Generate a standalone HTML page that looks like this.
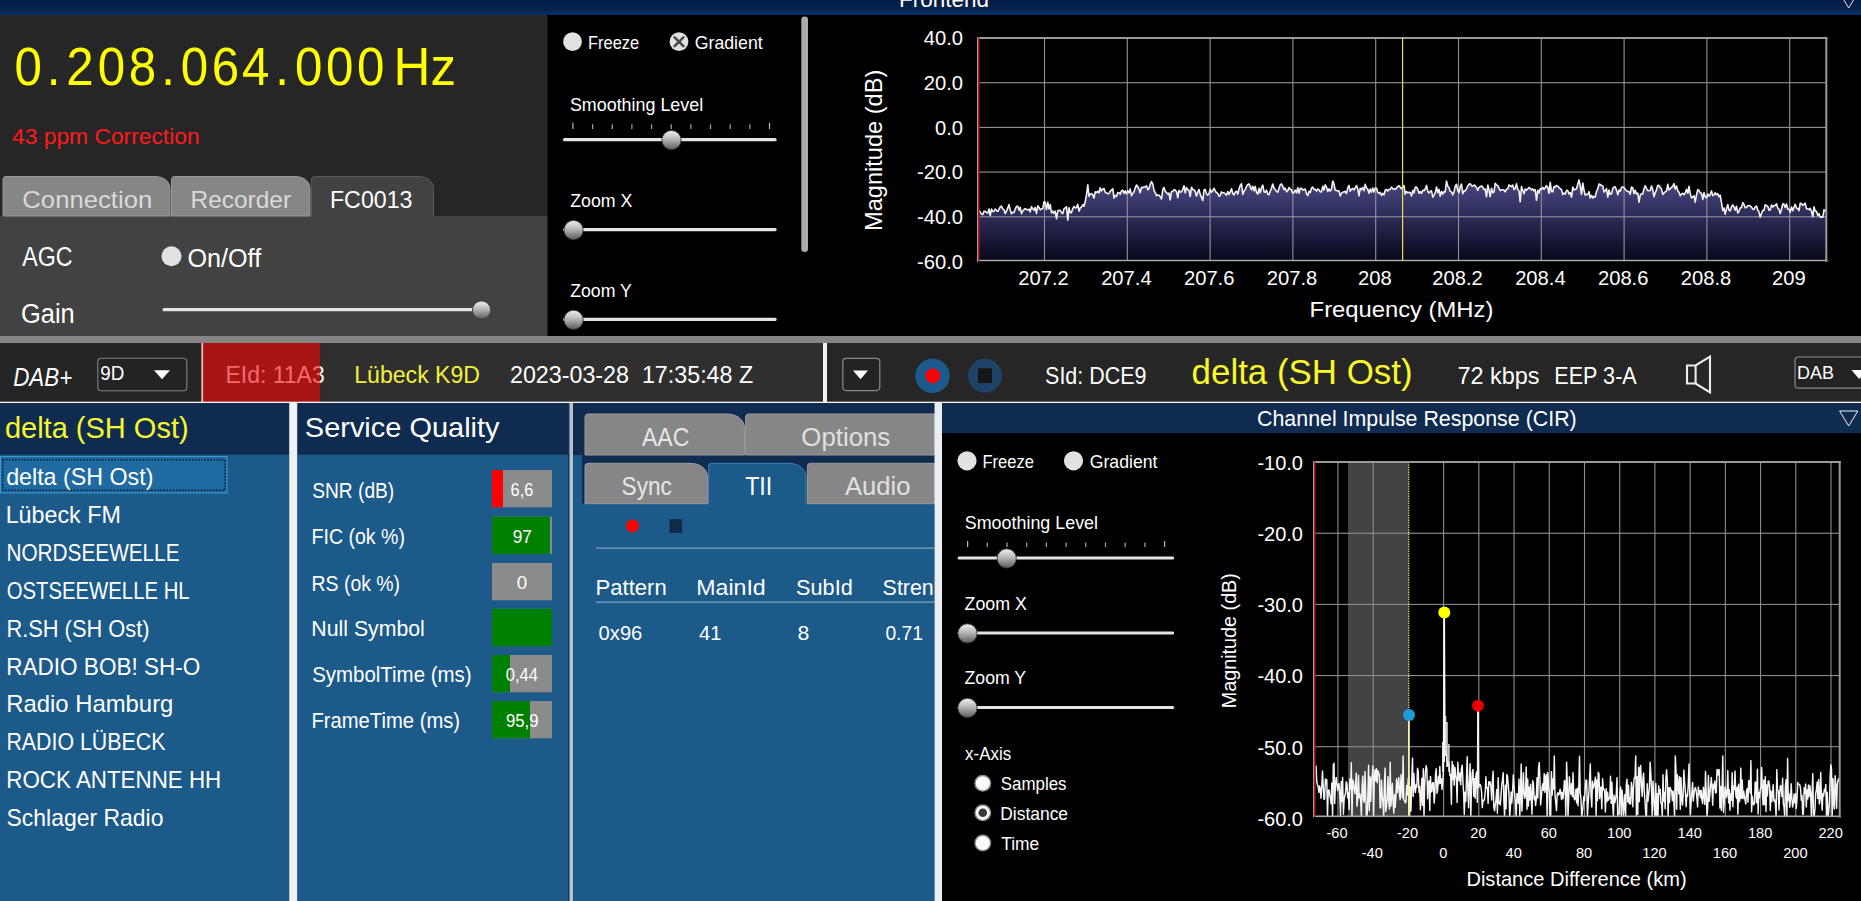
<!DOCTYPE html>
<html lang="en">
<head>
<meta charset="utf-8">
<title>DAB Receiver</title>
<style>
html,body{margin:0;padding:0;background:#000;overflow:hidden;}
body{width:1861px;height:901px;font-family:"Liberation Sans",sans-serif;}
svg{display:block;position:absolute;left:0;top:0;}
text{white-space:pre;}
</style>
</head>
<body>
<svg width="1861" height="901" viewBox="0 0 1861 901">
<defs>
<linearGradient id="thumb" x1="0" y1="0" x2="0" y2="1">
<stop offset="0" stop-color="#f0f0f0"/><stop offset="0.45" stop-color="#b8b8b8"/><stop offset="1" stop-color="#5a5a5a"/>
</linearGradient>
<linearGradient id="specfill" gradientUnits="userSpaceOnUse" x1="0" y1="184" x2="0" y2="261">
<stop offset="0" stop-color="#45457e"/><stop offset="0.45" stop-color="#2a2a55"/><stop offset="1" stop-color="#07071a"/>
</linearGradient>
<linearGradient id="tbar" x1="0" y1="0" x2="0" y2="1"><stop offset="0" stop-color="#041d45"/><stop offset="0.55" stop-color="#05224e"/><stop offset="1" stop-color="#082e64"/></linearGradient>
<clipPath id="clip1"><rect x="979" y="38" width="847.5" height="223"/></clipPath>
<clipPath id="clip2"><rect x="1315" y="462" width="824.5" height="354.5"/></clipPath>
</defs>
<rect x="0.00" y="0.00" width="1861.00" height="901.00" fill="#000" />
<rect x="0.00" y="0.00" width="1861.00" height="15.00" fill="url(#tbar)" />
<text x="899.07" y="7.00" font-family="Liberation Sans, sans-serif" font-size="21.50" fill="#fff" textLength="89.99" lengthAdjust="spacingAndGlyphs" >Frontend</text>
<path d="M1839.7,-7 L1857.7,-7 L1848.7,8 Z" fill="none" stroke="#e8e8e8" stroke-width="1"/>
<rect x="0.00" y="15.00" width="547.50" height="201.00" fill="#262626" />
<rect x="0.00" y="216.00" width="547.50" height="120.00" fill="#424242" />
<text transform="translate(28.10,85) scale(0.925,1)" text-anchor="middle" font-family="Liberation Sans, sans-serif" font-size="53.3" fill="#ffff00">0</text>
<text transform="translate(53.70,85) scale(0.925,1)" text-anchor="middle" font-family="Liberation Sans, sans-serif" font-size="53.3" fill="#ffff00">.</text>
<text transform="translate(79.90,85) scale(0.925,1)" text-anchor="middle" font-family="Liberation Sans, sans-serif" font-size="53.3" fill="#ffff00">2</text>
<text transform="translate(111.50,85) scale(0.925,1)" text-anchor="middle" font-family="Liberation Sans, sans-serif" font-size="53.3" fill="#ffff00">0</text>
<text transform="translate(142.40,85) scale(0.925,1)" text-anchor="middle" font-family="Liberation Sans, sans-serif" font-size="53.3" fill="#ffff00">8</text>
<text transform="translate(168.10,85) scale(0.925,1)" text-anchor="middle" font-family="Liberation Sans, sans-serif" font-size="53.3" fill="#ffff00">.</text>
<text transform="translate(194.40,85) scale(0.925,1)" text-anchor="middle" font-family="Liberation Sans, sans-serif" font-size="53.3" fill="#ffff00">0</text>
<text transform="translate(225.50,85) scale(0.925,1)" text-anchor="middle" font-family="Liberation Sans, sans-serif" font-size="53.3" fill="#ffff00">6</text>
<text transform="translate(255.80,85) scale(0.925,1)" text-anchor="middle" font-family="Liberation Sans, sans-serif" font-size="53.3" fill="#ffff00">4</text>
<text transform="translate(282.00,85) scale(0.925,1)" text-anchor="middle" font-family="Liberation Sans, sans-serif" font-size="53.3" fill="#ffff00">.</text>
<text transform="translate(308.60,85) scale(0.925,1)" text-anchor="middle" font-family="Liberation Sans, sans-serif" font-size="53.3" fill="#ffff00">0</text>
<text transform="translate(339.70,85) scale(0.925,1)" text-anchor="middle" font-family="Liberation Sans, sans-serif" font-size="53.3" fill="#ffff00">0</text>
<text transform="translate(370.70,85) scale(0.925,1)" text-anchor="middle" font-family="Liberation Sans, sans-serif" font-size="53.3" fill="#ffff00">0</text>
<text x="393.60" y="85.00" font-family="Liberation Sans, sans-serif" font-size="53.30" fill="#ffff00" textLength="62.48" lengthAdjust="spacingAndGlyphs" >Hz</text>
<text x="12.07" y="143.75" font-family="Liberation Sans, sans-serif" font-size="21.50" fill="#ff1a1a" textLength="187.52" lengthAdjust="spacingAndGlyphs" >43 ppm Correction</text>
<path d="M3.00,216.00 L3.00,179.50 Q3.00,176.50 6.00,176.50 L155.00,176.50 C163.70,176.50 170.00,181.54 170.00,188.50 L170.00,216.00 Z" fill="#868686" stroke="#9a9a9a" stroke-width="1"/>
<path d="M171.50,216.00 L171.50,179.50 Q171.50,176.50 174.50,176.50 L295.00,176.50 C303.70,176.50 310.00,181.54 310.00,188.50 L310.00,216.00 Z" fill="#868686" stroke="#9a9a9a" stroke-width="1"/>
<path d="M311.50,216.50 L311.50,179.50 Q311.50,176.50 314.50,176.50 L418.50,176.50 C427.20,176.50 433.50,181.54 433.50,188.50 L433.50,216.50 Z" fill="#424242" stroke="#5a5a5a" stroke-width="1"/>
<rect x="312.00" y="215.50" width="121.00" height="2.00" fill="#424242" />
<text x="22.29" y="207.50" font-family="Liberation Sans, sans-serif" font-size="24.50" fill="#dadada" textLength="130.01" lengthAdjust="spacingAndGlyphs" >Connection</text>
<text x="190.61" y="207.50" font-family="Liberation Sans, sans-serif" font-size="24.50" fill="#dadada" textLength="100.43" lengthAdjust="spacingAndGlyphs" >Recorder</text>
<text x="329.96" y="207.50" font-family="Liberation Sans, sans-serif" font-size="24.50" fill="#fff" textLength="82.54" lengthAdjust="spacingAndGlyphs" >FC0013</text>
<text x="22.19" y="266.00" font-family="Liberation Sans, sans-serif" font-size="27.00" fill="#fff" textLength="50.28" lengthAdjust="spacingAndGlyphs" >AGC</text>
<circle cx="171.5" cy="256.3" r="10" fill="#e2e2e2"/>
<text x="187.47" y="266.80" font-family="Liberation Sans, sans-serif" font-size="25.00" fill="#fff" textLength="73.66" lengthAdjust="spacingAndGlyphs" >On/Off</text>
<text x="21.00" y="323.00" font-family="Liberation Sans, sans-serif" font-size="27.00" fill="#fff" textLength="53.78" lengthAdjust="spacingAndGlyphs" >Gain</text>
<rect x="162.50" y="308.00" width="327.50" height="3.20" fill="#e4e4e4" rx="1.5"/>
<circle cx="481.50" cy="310.00" r="9.1" fill="url(#thumb)" stroke="#3c3c3c" stroke-width="0.9"/>
<circle cx="572.5" cy="41.7" r="9.4" fill="#e2e2e2"/>
<text x="587.97" y="48.70" font-family="Liberation Sans, sans-serif" font-size="18.50" fill="#fff" textLength="51.17" lengthAdjust="spacingAndGlyphs" >Freeze</text>
<circle cx="679" cy="41.7" r="9.4" fill="#e2e2e2"/>
<path d="M674.6,37.3 L683.4,46.1 M683.4,37.3 L674.6,46.1" stroke="#4a4a4a" stroke-width="2.6" stroke-linecap="round"/>
<text x="694.76" y="48.70" font-family="Liberation Sans, sans-serif" font-size="18.50" fill="#fff" textLength="67.92" lengthAdjust="spacingAndGlyphs" >Gradient</text>
<text x="569.95" y="111.00" font-family="Liberation Sans, sans-serif" font-size="18.50" fill="#fff" textLength="133.19" lengthAdjust="spacingAndGlyphs" >Smoothing Level</text>
<rect x="572.30" y="122.80" width="1.20" height="6.20" fill="#b8b8b8" />
<rect x="591.96" y="124.30" width="1.20" height="4.70" fill="#a8a8a8" />
<rect x="611.62" y="124.30" width="1.20" height="4.70" fill="#a8a8a8" />
<rect x="631.28" y="124.30" width="1.20" height="4.70" fill="#a8a8a8" />
<rect x="650.94" y="124.30" width="1.20" height="4.70" fill="#a8a8a8" />
<rect x="670.60" y="124.30" width="1.20" height="4.70" fill="#a8a8a8" />
<rect x="690.26" y="124.30" width="1.20" height="4.70" fill="#a8a8a8" />
<rect x="709.92" y="124.30" width="1.20" height="4.70" fill="#a8a8a8" />
<rect x="729.58" y="124.30" width="1.20" height="4.70" fill="#a8a8a8" />
<rect x="749.24" y="124.30" width="1.20" height="4.70" fill="#a8a8a8" />
<rect x="768.90" y="122.80" width="1.20" height="6.20" fill="#b8b8b8" />
<rect x="563.00" y="138.00" width="213.60" height="3.20" fill="#e4e4e4" rx="1.5"/>
<circle cx="671.50" cy="140.00" r="9.6" fill="url(#thumb)" stroke="#3c3c3c" stroke-width="0.9"/>
<text x="570.20" y="206.80" font-family="Liberation Sans, sans-serif" font-size="18.50" fill="#fff" textLength="62.20" lengthAdjust="spacingAndGlyphs" >Zoom X</text>
<rect x="563.00" y="228.00" width="213.60" height="3.20" fill="#e4e4e4" rx="1.5"/>
<circle cx="573.60" cy="230.00" r="9.6" fill="url(#thumb)" stroke="#3c3c3c" stroke-width="0.9"/>
<text x="570.20" y="296.80" font-family="Liberation Sans, sans-serif" font-size="18.50" fill="#fff" textLength="61.61" lengthAdjust="spacingAndGlyphs" >Zoom Y</text>
<rect x="563.00" y="317.80" width="213.60" height="3.20" fill="#e4e4e4" rx="1.5"/>
<circle cx="573.60" cy="319.80" r="9.6" fill="url(#thumb)" stroke="#3c3c3c" stroke-width="0.9"/>
<rect x="801.30" y="16.60" width="6.70" height="235.40" fill="#ababab" rx="3.3"/>
<polygon points="979,261 979.0,210.3 980.2,212.1 981.5,214.2 982.8,214.4 984.0,211.2 985.2,211.4 986.5,212.5 987.8,212.9 989.0,209.0 990.2,215.7 991.5,209.1 992.8,211.4 994.0,211.5 995.2,209.1 996.5,210.5 997.8,211.4 999.0,209.4 1000.2,206.9 1001.5,206.2 1002.8,209.0 1004.0,209.6 1005.2,213.5 1006.5,211.1 1007.8,207.9 1009.0,204.6 1010.2,209.7 1011.5,213.8 1012.8,212.4 1014.0,212.5 1015.2,209.0 1016.5,206.3 1017.8,206.4 1019.0,210.2 1020.2,207.4 1021.5,213.7 1022.8,210.9 1024.0,209.5 1025.2,208.6 1026.5,209.5 1027.8,209.8 1029.0,209.2 1030.2,211.8 1031.5,206.6 1032.8,208.8 1034.0,210.2 1035.2,207.4 1036.5,213.4 1037.8,205.7 1039.0,207.4 1040.2,209.9 1041.5,208.9 1042.8,208.7 1044.0,201.8 1045.2,202.3 1046.5,209.7 1047.8,202.4 1049.0,209.0 1050.2,204.6 1051.5,212.9 1052.8,211.0 1054.0,213.5 1055.2,211.1 1056.5,218.7 1057.8,210.8 1059.0,210.2 1060.2,210.4 1061.5,212.7 1062.8,213.6 1064.0,208.8 1065.2,208.0 1066.5,206.9 1067.8,220.1 1069.0,207.8 1070.2,212.6 1071.5,212.6 1072.8,208.6 1074.0,206.4 1075.2,207.8 1076.5,207.6 1077.8,204.4 1079.0,211.2 1080.2,208.0 1081.5,207.0 1082.8,204.5 1084.0,206.2 1085.2,201.8 1086.5,194.7 1087.8,184.8 1089.0,196.5 1090.2,193.9 1091.5,193.5 1092.8,194.9 1094.0,198.1 1095.2,191.8 1096.5,192.5 1097.8,191.3 1099.0,192.9 1100.2,187.8 1101.5,190.9 1102.8,189.1 1104.0,188.5 1105.2,192.3 1106.5,192.9 1107.8,193.8 1109.0,193.4 1110.2,191.1 1111.5,190.1 1112.8,188.9 1114.0,198.2 1115.2,195.4 1116.5,196.3 1117.8,192.6 1119.0,192.7 1120.2,194.3 1121.5,190.9 1122.8,190.2 1124.0,193.3 1125.2,190.9 1126.5,193.8 1127.8,190.8 1129.0,192.9 1130.2,189.1 1131.5,195.6 1132.8,193.4 1134.0,191.7 1135.2,187.9 1136.5,185.0 1137.8,186.7 1139.0,189.2 1140.2,192.7 1141.5,187.3 1142.8,187.6 1144.0,186.9 1145.2,187.0 1146.5,185.8 1147.8,189.8 1149.0,188.6 1150.2,184.3 1151.5,181.5 1152.8,184.2 1154.0,190.2 1155.2,192.7 1156.5,195.6 1157.8,194.9 1159.0,195.3 1160.2,196.6 1161.5,199.0 1162.8,189.4 1164.0,187.4 1165.2,191.2 1166.5,192.6 1167.8,194.1 1169.0,193.1 1170.2,199.9 1171.5,191.7 1172.8,191.3 1174.0,189.8 1175.2,190.1 1176.5,191.7 1177.8,197.7 1179.0,190.4 1180.2,191.9 1181.5,192.0 1182.8,189.1 1184.0,185.7 1185.2,192.8 1186.5,187.5 1187.8,189.6 1189.0,190.3 1190.2,196.5 1191.5,187.2 1192.8,189.6 1194.0,189.8 1195.2,191.5 1196.5,196.1 1197.8,192.1 1199.0,189.4 1200.2,194.4 1201.5,197.4 1202.8,200.5 1204.0,190.0 1205.2,189.4 1206.5,193.9 1207.8,195.1 1209.0,193.7 1210.2,189.2 1211.5,192.2 1212.8,190.7 1214.0,188.3 1215.2,190.6 1216.5,192.8 1217.8,193.2 1219.0,196.2 1220.2,195.5 1221.5,191.9 1222.8,192.8 1224.0,192.9 1225.2,193.8 1226.5,195.1 1227.8,191.5 1229.0,194.4 1230.2,192.1 1231.5,188.8 1232.8,193.5 1234.0,195.0 1235.2,192.2 1236.5,191.2 1237.8,194.1 1239.0,189.1 1240.2,185.5 1241.5,183.8 1242.8,194.4 1244.0,191.2 1245.2,189.5 1246.5,186.2 1247.8,184.6 1249.0,183.9 1250.2,186.4 1251.5,189.8 1252.8,186.2 1254.0,190.9 1255.2,186.4 1256.5,192.4 1257.8,194.1 1259.0,188.4 1260.2,192.7 1261.5,187.7 1262.8,185.1 1264.0,191.7 1265.2,192.3 1266.5,190.1 1267.8,194.3 1269.0,194.8 1270.2,191.2 1271.5,188.1 1272.8,184.1 1274.0,188.3 1275.2,189.5 1276.5,191.4 1277.8,192.2 1279.0,188.4 1280.2,184.8 1281.5,183.9 1282.8,186.4 1284.0,189.4 1285.2,188.0 1286.5,191.8 1287.8,190.6 1289.0,187.5 1290.2,189.1 1291.5,190.0 1292.8,193.1 1294.0,192.3 1295.2,190.0 1296.5,192.8 1297.8,187.7 1299.0,193.2 1300.2,188.4 1301.5,188.2 1302.8,190.1 1304.0,189.5 1305.2,189.0 1306.5,193.8 1307.8,195.6 1309.0,191.2 1310.2,192.6 1311.5,188.2 1312.8,187.1 1314.0,189.3 1315.2,189.4 1316.5,191.1 1317.8,189.0 1319.0,189.9 1320.2,191.9 1321.5,191.7 1322.8,186.3 1324.0,189.9 1325.2,184.9 1326.5,187.1 1327.8,191.4 1329.0,188.8 1330.2,191.1 1331.5,189.2 1332.8,181.0 1334.0,184.1 1335.2,190.1 1336.5,190.4 1337.8,191.1 1339.0,190.9 1340.2,195.9 1341.5,193.1 1342.8,192.1 1344.0,192.0 1345.2,191.3 1346.5,193.5 1347.8,187.7 1349.0,185.4 1350.2,191.1 1351.5,189.2 1352.8,188.6 1354.0,189.9 1355.2,187.6 1356.5,185.6 1357.8,189.1 1359.0,195.8 1360.2,188.4 1361.5,189.7 1362.8,187.5 1364.0,190.7 1365.2,184.4 1366.5,188.0 1367.8,189.4 1369.0,193.2 1370.2,189.0 1371.5,192.1 1372.8,188.0 1374.0,192.0 1375.2,188.1 1376.5,188.3 1377.8,192.5 1379.0,193.5 1380.2,192.3 1381.5,195.4 1382.8,193.4 1384.0,194.8 1385.2,190.3 1386.5,189.5 1387.8,191.1 1389.0,189.5 1390.2,189.5 1391.5,187.0 1392.8,188.9 1394.0,188.8 1395.2,189.4 1396.5,188.1 1397.8,186.6 1399.0,185.7 1400.2,187.2 1401.5,188.8 1402.8,186.7 1404.0,185.7 1405.2,194.1 1406.5,191.5 1407.8,192.8 1409.0,192.2 1410.2,192.5 1411.5,195.9 1412.8,190.3 1414.0,192.8 1415.2,187.3 1416.5,187.1 1417.8,189.5 1419.0,193.2 1420.2,191.5 1421.5,193.4 1422.8,190.3 1424.0,190.7 1425.2,189.1 1426.5,185.4 1427.8,191.4 1429.0,192.9 1430.2,191.5 1431.5,190.8 1432.8,197.2 1434.0,195.2 1435.2,193.1 1436.5,187.0 1437.8,192.6 1439.0,189.4 1440.2,196.1 1441.5,191.4 1442.8,194.2 1444.0,191.6 1445.2,192.0 1446.5,181.1 1447.8,186.3 1449.0,187.5 1450.2,191.2 1451.5,191.9 1452.8,194.8 1454.0,192.0 1455.2,186.2 1456.5,184.3 1457.8,190.5 1459.0,192.7 1460.2,186.8 1461.5,184.1 1462.8,193.8 1464.0,190.9 1465.2,190.9 1466.5,188.9 1467.8,185.7 1469.0,184.2 1470.2,183.7 1471.5,185.7 1472.8,186.1 1474.0,185.0 1475.2,185.9 1476.5,187.5 1477.8,190.3 1479.0,187.2 1480.2,186.8 1481.5,185.8 1482.8,187.3 1484.0,189.5 1485.2,189.0 1486.5,196.8 1487.8,185.0 1489.0,190.0 1490.2,196.6 1491.5,188.3 1492.8,192.7 1494.0,191.8 1495.2,183.3 1496.5,184.9 1497.8,185.7 1499.0,188.1 1500.2,190.6 1501.5,189.8 1502.8,189.7 1504.0,190.3 1505.2,191.8 1506.5,189.2 1507.8,188.7 1509.0,184.9 1510.2,185.8 1511.5,186.6 1512.8,185.1 1514.0,189.6 1515.2,188.5 1516.5,183.8 1517.8,189.6 1519.0,190.8 1520.2,201.8 1521.5,186.6 1522.8,190.4 1524.0,193.8 1525.2,189.0 1526.5,190.1 1527.8,188.9 1529.0,187.4 1530.2,188.3 1531.5,190.0 1532.8,188.9 1534.0,190.9 1535.2,189.6 1536.5,200.3 1537.8,190.2 1539.0,193.0 1540.2,188.6 1541.5,189.4 1542.8,187.3 1544.0,189.3 1545.2,187.7 1546.5,185.7 1547.8,187.4 1549.0,193.3 1550.2,182.4 1551.5,191.6 1552.8,191.7 1554.0,186.5 1555.2,186.9 1556.5,185.6 1557.8,186.2 1559.0,187.4 1560.2,188.8 1561.5,189.6 1562.8,194.5 1564.0,193.1 1565.2,194.1 1566.5,190.4 1567.8,190.5 1569.0,194.0 1570.2,192.6 1571.5,197.1 1572.8,187.1 1574.0,190.0 1575.2,189.3 1576.5,188.9 1577.8,184.0 1579.0,179.9 1580.2,185.7 1581.5,194.3 1582.8,183.1 1584.0,190.1 1585.2,195.1 1586.5,194.3 1587.8,194.5 1589.0,191.7 1590.2,198.0 1591.5,195.4 1592.8,198.1 1594.0,196.1 1595.2,197.1 1596.5,191.4 1597.8,188.5 1599.0,184.1 1600.2,184.5 1601.5,185.5 1602.8,185.9 1604.0,192.0 1605.2,190.7 1606.5,188.7 1607.8,197.2 1609.0,190.0 1610.2,194.3 1611.5,193.9 1612.8,188.3 1614.0,187.1 1615.2,186.8 1616.5,190.1 1617.8,194.8 1619.0,190.1 1620.2,191.3 1621.5,187.5 1622.8,187.1 1624.0,187.4 1625.2,189.3 1626.5,190.7 1627.8,191.6 1629.0,191.6 1630.2,194.3 1631.5,187.0 1632.8,187.9 1634.0,193.7 1635.2,190.2 1636.5,193.9 1637.8,193.1 1639.0,202.2 1640.2,195.1 1641.5,193.9 1642.8,193.7 1644.0,188.7 1645.2,185.7 1646.5,188.3 1647.8,190.6 1649.0,190.7 1650.2,190.5 1651.5,186.1 1652.8,189.8 1654.0,196.8 1655.2,192.8 1656.5,189.9 1657.8,185.3 1659.0,185.5 1660.2,187.6 1661.5,189.1 1662.8,194.4 1664.0,193.0 1665.2,191.7 1666.5,191.2 1667.8,184.3 1669.0,190.0 1670.2,189.0 1671.5,187.3 1672.8,186.3 1674.0,183.7 1675.2,189.0 1676.5,186.1 1677.8,190.9 1679.0,192.2 1680.2,195.8 1681.5,193.9 1682.8,193.2 1684.0,194.7 1685.2,192.9 1686.5,189.3 1687.8,193.3 1689.0,186.3 1690.2,193.4 1691.5,197.9 1692.8,197.0 1694.0,195.7 1695.2,202.1 1696.5,194.9 1697.8,189.5 1699.0,190.6 1700.2,192.8 1701.5,193.2 1702.8,199.4 1704.0,192.6 1705.2,196.9 1706.5,197.8 1707.8,194.0 1709.0,196.1 1710.2,194.7 1711.5,190.9 1712.8,195.6 1714.0,194.8 1715.2,192.7 1716.5,194.7 1717.8,193.7 1719.0,196.7 1720.2,195.2 1721.5,202.6 1722.8,210.6 1724.0,208.0 1725.2,214.2 1726.5,209.0 1727.8,204.5 1729.0,210.3 1730.2,210.9 1731.5,206.8 1732.8,204.9 1734.0,207.0 1735.2,210.3 1736.5,206.2 1737.8,213.0 1739.0,211.4 1740.2,207.7 1741.5,207.6 1742.8,202.6 1744.0,204.5 1745.2,207.6 1746.5,207.5 1747.8,205.8 1749.0,205.5 1750.2,206.0 1751.5,207.1 1752.8,209.3 1754.0,209.4 1755.2,207.2 1756.5,206.0 1757.8,210.2 1759.0,211.9 1760.2,217.1 1761.5,213.5 1762.8,210.2 1764.0,210.4 1765.2,204.7 1766.5,205.8 1767.8,206.2 1769.0,210.3 1770.2,209.9 1771.5,205.0 1772.8,207.0 1774.0,205.5 1775.2,205.5 1776.5,203.8 1777.8,208.2 1779.0,209.1 1780.2,213.6 1781.5,209.3 1782.8,203.7 1784.0,204.2 1785.2,207.6 1786.5,204.0 1787.8,209.3 1789.0,209.3 1790.2,212.3 1791.5,207.0 1792.8,210.7 1794.0,207.1 1795.2,204.3 1796.5,208.0 1797.8,208.7 1799.0,210.6 1800.2,203.3 1801.5,203.6 1802.8,205.4 1804.0,204.3 1805.2,203.2 1806.5,208.8 1807.8,208.8 1809.0,209.6 1810.2,208.4 1811.5,211.5 1812.8,216.7 1814.0,206.9 1815.2,210.9 1816.5,211.3 1817.8,215.5 1819.0,213.7 1820.2,217.1 1821.5,216.9 1822.8,217.1 1824.0,209.9 1825.2,211.0 1826.5,208.4 1826.3,261" fill="url(#specfill)" clip-path="url(#clip1)"/>
<rect x="1043.95" y="38.00" width="1.10" height="223.00" fill="#92929a" />
<rect x="1126.75" y="38.00" width="1.10" height="223.00" fill="#92929a" />
<rect x="1209.55" y="38.00" width="1.10" height="223.00" fill="#92929a" />
<rect x="1292.35" y="38.00" width="1.10" height="223.00" fill="#92929a" />
<rect x="1375.15" y="38.00" width="1.10" height="223.00" fill="#92929a" />
<rect x="1457.95" y="38.00" width="1.10" height="223.00" fill="#92929a" />
<rect x="1540.75" y="38.00" width="1.10" height="223.00" fill="#92929a" />
<rect x="1623.55" y="38.00" width="1.10" height="223.00" fill="#92929a" />
<rect x="1706.35" y="38.00" width="1.10" height="223.00" fill="#92929a" />
<rect x="1789.15" y="38.00" width="1.10" height="223.00" fill="#92929a" />
<rect x="978.50" y="82.15" width="847.80" height="1.10" fill="#92929a" />
<rect x="978.50" y="126.85" width="847.80" height="1.10" fill="#92929a" />
<rect x="978.50" y="171.55" width="847.80" height="1.10" fill="#92929a" />
<rect x="978.50" y="216.25" width="847.80" height="1.10" fill="#92929a" />
<polyline points="979.0,210.3 980.2,212.1 981.5,214.2 982.8,214.4 984.0,211.2 985.2,211.4 986.5,212.5 987.8,212.9 989.0,209.0 990.2,215.7 991.5,209.1 992.8,211.4 994.0,211.5 995.2,209.1 996.5,210.5 997.8,211.4 999.0,209.4 1000.2,206.9 1001.5,206.2 1002.8,209.0 1004.0,209.6 1005.2,213.5 1006.5,211.1 1007.8,207.9 1009.0,204.6 1010.2,209.7 1011.5,213.8 1012.8,212.4 1014.0,212.5 1015.2,209.0 1016.5,206.3 1017.8,206.4 1019.0,210.2 1020.2,207.4 1021.5,213.7 1022.8,210.9 1024.0,209.5 1025.2,208.6 1026.5,209.5 1027.8,209.8 1029.0,209.2 1030.2,211.8 1031.5,206.6 1032.8,208.8 1034.0,210.2 1035.2,207.4 1036.5,213.4 1037.8,205.7 1039.0,207.4 1040.2,209.9 1041.5,208.9 1042.8,208.7 1044.0,201.8 1045.2,202.3 1046.5,209.7 1047.8,202.4 1049.0,209.0 1050.2,204.6 1051.5,212.9 1052.8,211.0 1054.0,213.5 1055.2,211.1 1056.5,218.7 1057.8,210.8 1059.0,210.2 1060.2,210.4 1061.5,212.7 1062.8,213.6 1064.0,208.8 1065.2,208.0 1066.5,206.9 1067.8,220.1 1069.0,207.8 1070.2,212.6 1071.5,212.6 1072.8,208.6 1074.0,206.4 1075.2,207.8 1076.5,207.6 1077.8,204.4 1079.0,211.2 1080.2,208.0 1081.5,207.0 1082.8,204.5 1084.0,206.2 1085.2,201.8 1086.5,194.7 1087.8,184.8 1089.0,196.5 1090.2,193.9 1091.5,193.5 1092.8,194.9 1094.0,198.1 1095.2,191.8 1096.5,192.5 1097.8,191.3 1099.0,192.9 1100.2,187.8 1101.5,190.9 1102.8,189.1 1104.0,188.5 1105.2,192.3 1106.5,192.9 1107.8,193.8 1109.0,193.4 1110.2,191.1 1111.5,190.1 1112.8,188.9 1114.0,198.2 1115.2,195.4 1116.5,196.3 1117.8,192.6 1119.0,192.7 1120.2,194.3 1121.5,190.9 1122.8,190.2 1124.0,193.3 1125.2,190.9 1126.5,193.8 1127.8,190.8 1129.0,192.9 1130.2,189.1 1131.5,195.6 1132.8,193.4 1134.0,191.7 1135.2,187.9 1136.5,185.0 1137.8,186.7 1139.0,189.2 1140.2,192.7 1141.5,187.3 1142.8,187.6 1144.0,186.9 1145.2,187.0 1146.5,185.8 1147.8,189.8 1149.0,188.6 1150.2,184.3 1151.5,181.5 1152.8,184.2 1154.0,190.2 1155.2,192.7 1156.5,195.6 1157.8,194.9 1159.0,195.3 1160.2,196.6 1161.5,199.0 1162.8,189.4 1164.0,187.4 1165.2,191.2 1166.5,192.6 1167.8,194.1 1169.0,193.1 1170.2,199.9 1171.5,191.7 1172.8,191.3 1174.0,189.8 1175.2,190.1 1176.5,191.7 1177.8,197.7 1179.0,190.4 1180.2,191.9 1181.5,192.0 1182.8,189.1 1184.0,185.7 1185.2,192.8 1186.5,187.5 1187.8,189.6 1189.0,190.3 1190.2,196.5 1191.5,187.2 1192.8,189.6 1194.0,189.8 1195.2,191.5 1196.5,196.1 1197.8,192.1 1199.0,189.4 1200.2,194.4 1201.5,197.4 1202.8,200.5 1204.0,190.0 1205.2,189.4 1206.5,193.9 1207.8,195.1 1209.0,193.7 1210.2,189.2 1211.5,192.2 1212.8,190.7 1214.0,188.3 1215.2,190.6 1216.5,192.8 1217.8,193.2 1219.0,196.2 1220.2,195.5 1221.5,191.9 1222.8,192.8 1224.0,192.9 1225.2,193.8 1226.5,195.1 1227.8,191.5 1229.0,194.4 1230.2,192.1 1231.5,188.8 1232.8,193.5 1234.0,195.0 1235.2,192.2 1236.5,191.2 1237.8,194.1 1239.0,189.1 1240.2,185.5 1241.5,183.8 1242.8,194.4 1244.0,191.2 1245.2,189.5 1246.5,186.2 1247.8,184.6 1249.0,183.9 1250.2,186.4 1251.5,189.8 1252.8,186.2 1254.0,190.9 1255.2,186.4 1256.5,192.4 1257.8,194.1 1259.0,188.4 1260.2,192.7 1261.5,187.7 1262.8,185.1 1264.0,191.7 1265.2,192.3 1266.5,190.1 1267.8,194.3 1269.0,194.8 1270.2,191.2 1271.5,188.1 1272.8,184.1 1274.0,188.3 1275.2,189.5 1276.5,191.4 1277.8,192.2 1279.0,188.4 1280.2,184.8 1281.5,183.9 1282.8,186.4 1284.0,189.4 1285.2,188.0 1286.5,191.8 1287.8,190.6 1289.0,187.5 1290.2,189.1 1291.5,190.0 1292.8,193.1 1294.0,192.3 1295.2,190.0 1296.5,192.8 1297.8,187.7 1299.0,193.2 1300.2,188.4 1301.5,188.2 1302.8,190.1 1304.0,189.5 1305.2,189.0 1306.5,193.8 1307.8,195.6 1309.0,191.2 1310.2,192.6 1311.5,188.2 1312.8,187.1 1314.0,189.3 1315.2,189.4 1316.5,191.1 1317.8,189.0 1319.0,189.9 1320.2,191.9 1321.5,191.7 1322.8,186.3 1324.0,189.9 1325.2,184.9 1326.5,187.1 1327.8,191.4 1329.0,188.8 1330.2,191.1 1331.5,189.2 1332.8,181.0 1334.0,184.1 1335.2,190.1 1336.5,190.4 1337.8,191.1 1339.0,190.9 1340.2,195.9 1341.5,193.1 1342.8,192.1 1344.0,192.0 1345.2,191.3 1346.5,193.5 1347.8,187.7 1349.0,185.4 1350.2,191.1 1351.5,189.2 1352.8,188.6 1354.0,189.9 1355.2,187.6 1356.5,185.6 1357.8,189.1 1359.0,195.8 1360.2,188.4 1361.5,189.7 1362.8,187.5 1364.0,190.7 1365.2,184.4 1366.5,188.0 1367.8,189.4 1369.0,193.2 1370.2,189.0 1371.5,192.1 1372.8,188.0 1374.0,192.0 1375.2,188.1 1376.5,188.3 1377.8,192.5 1379.0,193.5 1380.2,192.3 1381.5,195.4 1382.8,193.4 1384.0,194.8 1385.2,190.3 1386.5,189.5 1387.8,191.1 1389.0,189.5 1390.2,189.5 1391.5,187.0 1392.8,188.9 1394.0,188.8 1395.2,189.4 1396.5,188.1 1397.8,186.6 1399.0,185.7 1400.2,187.2 1401.5,188.8 1402.8,186.7 1404.0,185.7 1405.2,194.1 1406.5,191.5 1407.8,192.8 1409.0,192.2 1410.2,192.5 1411.5,195.9 1412.8,190.3 1414.0,192.8 1415.2,187.3 1416.5,187.1 1417.8,189.5 1419.0,193.2 1420.2,191.5 1421.5,193.4 1422.8,190.3 1424.0,190.7 1425.2,189.1 1426.5,185.4 1427.8,191.4 1429.0,192.9 1430.2,191.5 1431.5,190.8 1432.8,197.2 1434.0,195.2 1435.2,193.1 1436.5,187.0 1437.8,192.6 1439.0,189.4 1440.2,196.1 1441.5,191.4 1442.8,194.2 1444.0,191.6 1445.2,192.0 1446.5,181.1 1447.8,186.3 1449.0,187.5 1450.2,191.2 1451.5,191.9 1452.8,194.8 1454.0,192.0 1455.2,186.2 1456.5,184.3 1457.8,190.5 1459.0,192.7 1460.2,186.8 1461.5,184.1 1462.8,193.8 1464.0,190.9 1465.2,190.9 1466.5,188.9 1467.8,185.7 1469.0,184.2 1470.2,183.7 1471.5,185.7 1472.8,186.1 1474.0,185.0 1475.2,185.9 1476.5,187.5 1477.8,190.3 1479.0,187.2 1480.2,186.8 1481.5,185.8 1482.8,187.3 1484.0,189.5 1485.2,189.0 1486.5,196.8 1487.8,185.0 1489.0,190.0 1490.2,196.6 1491.5,188.3 1492.8,192.7 1494.0,191.8 1495.2,183.3 1496.5,184.9 1497.8,185.7 1499.0,188.1 1500.2,190.6 1501.5,189.8 1502.8,189.7 1504.0,190.3 1505.2,191.8 1506.5,189.2 1507.8,188.7 1509.0,184.9 1510.2,185.8 1511.5,186.6 1512.8,185.1 1514.0,189.6 1515.2,188.5 1516.5,183.8 1517.8,189.6 1519.0,190.8 1520.2,201.8 1521.5,186.6 1522.8,190.4 1524.0,193.8 1525.2,189.0 1526.5,190.1 1527.8,188.9 1529.0,187.4 1530.2,188.3 1531.5,190.0 1532.8,188.9 1534.0,190.9 1535.2,189.6 1536.5,200.3 1537.8,190.2 1539.0,193.0 1540.2,188.6 1541.5,189.4 1542.8,187.3 1544.0,189.3 1545.2,187.7 1546.5,185.7 1547.8,187.4 1549.0,193.3 1550.2,182.4 1551.5,191.6 1552.8,191.7 1554.0,186.5 1555.2,186.9 1556.5,185.6 1557.8,186.2 1559.0,187.4 1560.2,188.8 1561.5,189.6 1562.8,194.5 1564.0,193.1 1565.2,194.1 1566.5,190.4 1567.8,190.5 1569.0,194.0 1570.2,192.6 1571.5,197.1 1572.8,187.1 1574.0,190.0 1575.2,189.3 1576.5,188.9 1577.8,184.0 1579.0,179.9 1580.2,185.7 1581.5,194.3 1582.8,183.1 1584.0,190.1 1585.2,195.1 1586.5,194.3 1587.8,194.5 1589.0,191.7 1590.2,198.0 1591.5,195.4 1592.8,198.1 1594.0,196.1 1595.2,197.1 1596.5,191.4 1597.8,188.5 1599.0,184.1 1600.2,184.5 1601.5,185.5 1602.8,185.9 1604.0,192.0 1605.2,190.7 1606.5,188.7 1607.8,197.2 1609.0,190.0 1610.2,194.3 1611.5,193.9 1612.8,188.3 1614.0,187.1 1615.2,186.8 1616.5,190.1 1617.8,194.8 1619.0,190.1 1620.2,191.3 1621.5,187.5 1622.8,187.1 1624.0,187.4 1625.2,189.3 1626.5,190.7 1627.8,191.6 1629.0,191.6 1630.2,194.3 1631.5,187.0 1632.8,187.9 1634.0,193.7 1635.2,190.2 1636.5,193.9 1637.8,193.1 1639.0,202.2 1640.2,195.1 1641.5,193.9 1642.8,193.7 1644.0,188.7 1645.2,185.7 1646.5,188.3 1647.8,190.6 1649.0,190.7 1650.2,190.5 1651.5,186.1 1652.8,189.8 1654.0,196.8 1655.2,192.8 1656.5,189.9 1657.8,185.3 1659.0,185.5 1660.2,187.6 1661.5,189.1 1662.8,194.4 1664.0,193.0 1665.2,191.7 1666.5,191.2 1667.8,184.3 1669.0,190.0 1670.2,189.0 1671.5,187.3 1672.8,186.3 1674.0,183.7 1675.2,189.0 1676.5,186.1 1677.8,190.9 1679.0,192.2 1680.2,195.8 1681.5,193.9 1682.8,193.2 1684.0,194.7 1685.2,192.9 1686.5,189.3 1687.8,193.3 1689.0,186.3 1690.2,193.4 1691.5,197.9 1692.8,197.0 1694.0,195.7 1695.2,202.1 1696.5,194.9 1697.8,189.5 1699.0,190.6 1700.2,192.8 1701.5,193.2 1702.8,199.4 1704.0,192.6 1705.2,196.9 1706.5,197.8 1707.8,194.0 1709.0,196.1 1710.2,194.7 1711.5,190.9 1712.8,195.6 1714.0,194.8 1715.2,192.7 1716.5,194.7 1717.8,193.7 1719.0,196.7 1720.2,195.2 1721.5,202.6 1722.8,210.6 1724.0,208.0 1725.2,214.2 1726.5,209.0 1727.8,204.5 1729.0,210.3 1730.2,210.9 1731.5,206.8 1732.8,204.9 1734.0,207.0 1735.2,210.3 1736.5,206.2 1737.8,213.0 1739.0,211.4 1740.2,207.7 1741.5,207.6 1742.8,202.6 1744.0,204.5 1745.2,207.6 1746.5,207.5 1747.8,205.8 1749.0,205.5 1750.2,206.0 1751.5,207.1 1752.8,209.3 1754.0,209.4 1755.2,207.2 1756.5,206.0 1757.8,210.2 1759.0,211.9 1760.2,217.1 1761.5,213.5 1762.8,210.2 1764.0,210.4 1765.2,204.7 1766.5,205.8 1767.8,206.2 1769.0,210.3 1770.2,209.9 1771.5,205.0 1772.8,207.0 1774.0,205.5 1775.2,205.5 1776.5,203.8 1777.8,208.2 1779.0,209.1 1780.2,213.6 1781.5,209.3 1782.8,203.7 1784.0,204.2 1785.2,207.6 1786.5,204.0 1787.8,209.3 1789.0,209.3 1790.2,212.3 1791.5,207.0 1792.8,210.7 1794.0,207.1 1795.2,204.3 1796.5,208.0 1797.8,208.7 1799.0,210.6 1800.2,203.3 1801.5,203.6 1802.8,205.4 1804.0,204.3 1805.2,203.2 1806.5,208.8 1807.8,208.8 1809.0,209.6 1810.2,208.4 1811.5,211.5 1812.8,216.7 1814.0,206.9 1815.2,210.9 1816.5,211.3 1817.8,215.5 1819.0,213.7 1820.2,217.1 1821.5,216.9 1822.8,217.1 1824.0,209.9 1825.2,211.0 1826.5,208.4" fill="none" stroke="#f2f2f2" stroke-width="1.6" stroke-linejoin="round" clip-path="url(#clip1)"/>
<rect x="978.50" y="37.00" width="848.80" height="2.00" fill="#9a9a9a" />
<rect x="978.50" y="259.80" width="848.80" height="1.40" fill="#b0b0b0" />
<rect x="1825.30" y="37.00" width="2.00" height="225.00" fill="#9a9a9a" />
<rect x="977.00" y="37.00" width="1.10" height="225.00" fill="#a0a0a0" />
<rect x="978.00" y="38.00" width="1.60" height="223.00" fill="#b01a1a" />
<rect x="1402.00" y="38.00" width="1.20" height="223.00" fill="#e8e040" />
<text x="963.00" y="45.20" text-anchor="end" font-family="Liberation Sans, sans-serif" font-size="20.20" fill="#fff">40.0</text>
<text x="963.00" y="89.90" text-anchor="end" font-family="Liberation Sans, sans-serif" font-size="20.20" fill="#fff">20.0</text>
<text x="963.00" y="134.60" text-anchor="end" font-family="Liberation Sans, sans-serif" font-size="20.20" fill="#fff">0.0</text>
<text x="963.00" y="179.30" text-anchor="end" font-family="Liberation Sans, sans-serif" font-size="20.20" fill="#fff">-20.0</text>
<text x="963.00" y="224.00" text-anchor="end" font-family="Liberation Sans, sans-serif" font-size="20.20" fill="#fff">-40.0</text>
<text x="963.00" y="268.70" text-anchor="end" font-family="Liberation Sans, sans-serif" font-size="20.20" fill="#fff">-60.0</text>
<text x="1043.60" y="285.00" text-anchor="middle" font-family="Liberation Sans, sans-serif" font-size="20.20" fill="#fff" >207.2</text>
<text x="1126.40" y="285.00" text-anchor="middle" font-family="Liberation Sans, sans-serif" font-size="20.20" fill="#fff" >207.4</text>
<text x="1209.20" y="285.00" text-anchor="middle" font-family="Liberation Sans, sans-serif" font-size="20.20" fill="#fff" >207.6</text>
<text x="1292.00" y="285.00" text-anchor="middle" font-family="Liberation Sans, sans-serif" font-size="20.20" fill="#fff" >207.8</text>
<text x="1374.80" y="285.00" text-anchor="middle" font-family="Liberation Sans, sans-serif" font-size="20.20" fill="#fff" >208</text>
<text x="1457.60" y="285.00" text-anchor="middle" font-family="Liberation Sans, sans-serif" font-size="20.20" fill="#fff" >208.2</text>
<text x="1540.40" y="285.00" text-anchor="middle" font-family="Liberation Sans, sans-serif" font-size="20.20" fill="#fff" >208.4</text>
<text x="1623.20" y="285.00" text-anchor="middle" font-family="Liberation Sans, sans-serif" font-size="20.20" fill="#fff" >208.6</text>
<text x="1706.00" y="285.00" text-anchor="middle" font-family="Liberation Sans, sans-serif" font-size="20.20" fill="#fff" >208.8</text>
<text x="1788.80" y="285.00" text-anchor="middle" font-family="Liberation Sans, sans-serif" font-size="20.20" fill="#fff" >209</text>
<text x="1309.62" y="316.50" font-family="Liberation Sans, sans-serif" font-size="22.50" fill="#fff" textLength="183.77" lengthAdjust="spacingAndGlyphs" >Frequency (MHz)</text>
<text transform="translate(881.5,150.3) rotate(-90)" text-anchor="middle" font-family="Liberation Sans, sans-serif" font-size="23.6" fill="#fff" textLength="161.2" lengthAdjust="spacingAndGlyphs">Magnitude (dB)</text>
<rect x="0.00" y="336.00" width="1861.00" height="7.50" fill="#858585" />
<rect x="0.00" y="343.00" width="202.00" height="59.00" fill="#252525" />
<rect x="202.00" y="343.00" width="118.10" height="59.00" fill="#a81515" />
<rect x="201.40" y="343.00" width="1.70" height="59.00" fill="#f6c4c4" />
<rect x="320.10" y="343.00" width="503.40" height="59.00" fill="#2f2f2f" />
<rect x="823.00" y="343.00" width="4.00" height="59.00" fill="#f2f2f2" />
<rect x="827.00" y="343.00" width="1034.00" height="59.00" fill="#262626" />
<rect x="0.00" y="401.70" width="1861.00" height="1.40" fill="#f4f4f4" />
<text x="13.23" y="386.00" font-family="Liberation Sans, sans-serif" font-size="25.00" font-style="italic" fill="#fff" textLength="58.96" lengthAdjust="spacingAndGlyphs" >DAB+</text>
<rect x="97.8" y="358.3" width="89" height="32.5" rx="3.5" fill="#232323" stroke="#828282" stroke-width="1.1"/>
<text x="100.26" y="380.40" font-family="Liberation Sans, sans-serif" font-size="19.50" fill="#fff" textLength="24.04" lengthAdjust="spacingAndGlyphs" >9D</text>
<path d="M154,370.2 L170,370.2 L162,379.3 Z" fill="#fff"/>
<clipPath id="clipE1"><rect x="200" y="343" width="120.1" height="59"/></clipPath><clipPath id="clipE2"><rect x="320.1" y="343" width="30" height="59"/></clipPath>
<text x="225.43" y="382.60" font-family="Liberation Sans, sans-serif" font-size="23.00" fill="#f56a6a" textLength="99.24" lengthAdjust="spacingAndGlyphs" clip-path="url(#clipE1)">EId: 11A3</text>
<text x="225.43" y="382.60" font-family="Liberation Sans, sans-serif" font-size="23.00" fill="#f4f4f4" textLength="99.24" lengthAdjust="spacingAndGlyphs" clip-path="url(#clipE2)">EId: 11A3</text>
<text x="354.26" y="382.50" font-family="Liberation Sans, sans-serif" font-size="23.50" fill="#f2f23a" textLength="125.77" lengthAdjust="spacingAndGlyphs" >Lübeck K9D</text>
<text x="509.99" y="382.50" font-family="Liberation Sans, sans-serif" font-size="23.50" fill="#fff" textLength="243.17" lengthAdjust="spacingAndGlyphs" >2023-03-28  17:35:48 Z</text>
<rect x="842.8" y="358.3" width="37" height="32.3" rx="3.5" fill="#232323" stroke="#8a8a8a" stroke-width="1.2"/>
<path d="M853,370.6 L868,370.6 L860.5,379.2 Z" fill="#fff"/>
<circle cx="932.5" cy="375.8" r="17.2" fill="#1c5a8c"/>
<circle cx="932.7" cy="375.8" r="7.4" fill="#ff0000"/>
<circle cx="985" cy="375.8" r="17" fill="#1e4366"/>
<rect x="978.00" y="368.30" width="14.00" height="14.80" fill="#161616" />
<text x="1045.09" y="383.75" font-family="Liberation Sans, sans-serif" font-size="24.00" fill="#fff" textLength="101.31" lengthAdjust="spacingAndGlyphs" >SId: DCE9</text>
<text x="1191.61" y="383.75" font-family="Liberation Sans, sans-serif" font-size="35.00" fill="#f8f82c" textLength="220.89" lengthAdjust="spacingAndGlyphs" >delta (SH Ost)</text>
<text x="1457.40" y="384.20" font-family="Liberation Sans, sans-serif" font-size="24.50" fill="#fff" textLength="82.09" lengthAdjust="spacingAndGlyphs" >72 kbps</text>
<text x="1554.34" y="384.20" font-family="Liberation Sans, sans-serif" font-size="24.50" fill="#fff" textLength="82.38" lengthAdjust="spacingAndGlyphs" >EEP 3-A</text>
<path d="M1687,365.5 L1695.6,365.5 L1710,356.6 L1710,392.4 L1695.6,383.5 L1687,383.5 Z M1695.6,365.5 L1695.6,383.5" fill="none" stroke="#ececec" stroke-width="2.1" stroke-linejoin="miter"/>
<rect x="1795" y="357" width="80" height="31.2" rx="3.5" fill="#232323" stroke="#8a8a8a" stroke-width="1.2"/>
<text x="1796.98" y="378.80" font-family="Liberation Sans, sans-serif" font-size="19.00" fill="#fff" textLength="36.93" lengthAdjust="spacingAndGlyphs" >DAB</text>
<path d="M1851.5,370 L1867,370 L1859.2,379 Z" fill="#fff"/>
<rect x="0.00" y="403.00" width="289.20" height="51.40" fill="#0f2c50" />
<rect x="0.00" y="454.40" width="289.20" height="446.60" fill="#1c5a8a" />
<text x="4.89" y="437.60" font-family="Liberation Sans, sans-serif" font-size="30.00" fill="#f8f82c" textLength="183.76" lengthAdjust="spacingAndGlyphs" >delta (SH Ost)</text>
<rect x="0.5" y="456.5" width="226.5" height="36.5" fill="#1f6ba1" stroke="#3a96d4" stroke-width="1"/>
<rect x="2.7" y="459.7" width="222.4" height="30.6" fill="none" stroke="#0a1c30" stroke-width="1.6" stroke-dasharray="1.55,1.55"/>
<text x="6.13" y="485.00" font-family="Liberation Sans, sans-serif" font-size="24.00" fill="#fff" textLength="147.26" lengthAdjust="spacingAndGlyphs" >delta (SH Ost)</text>
<text x="5.66" y="522.70" font-family="Liberation Sans, sans-serif" font-size="24.00" fill="#fff" textLength="115.14" lengthAdjust="spacingAndGlyphs" >Lübeck FM</text>
<text x="6.47" y="560.80" font-family="Liberation Sans, sans-serif" font-size="24.00" fill="#fff" textLength="173.04" lengthAdjust="spacingAndGlyphs" >NORDSEEWELLE</text>
<text x="6.65" y="599.00" font-family="Liberation Sans, sans-serif" font-size="24.00" fill="#fff" textLength="183.04" lengthAdjust="spacingAndGlyphs" >OSTSEEWELLE HL</text>
<text x="6.38" y="636.90" font-family="Liberation Sans, sans-serif" font-size="24.00" fill="#fff" textLength="143.15" lengthAdjust="spacingAndGlyphs" >R.SH (SH Ost)</text>
<text x="6.32" y="674.70" font-family="Liberation Sans, sans-serif" font-size="24.00" fill="#fff" textLength="193.90" lengthAdjust="spacingAndGlyphs" >RADIO BOB! SH-O</text>
<text x="6.21" y="712.00" font-family="Liberation Sans, sans-serif" font-size="24.00" fill="#fff" textLength="167.16" lengthAdjust="spacingAndGlyphs" >Radio Hamburg</text>
<text x="6.42" y="749.90" font-family="Liberation Sans, sans-serif" font-size="24.00" fill="#fff" textLength="158.97" lengthAdjust="spacingAndGlyphs" >RADIO LÜBECK</text>
<text x="6.34" y="787.80" font-family="Liberation Sans, sans-serif" font-size="24.00" fill="#fff" textLength="214.87" lengthAdjust="spacingAndGlyphs" >ROCK ANTENNE HH</text>
<text x="6.52" y="826.00" font-family="Liberation Sans, sans-serif" font-size="24.00" fill="#fff" textLength="156.91" lengthAdjust="spacingAndGlyphs" >Schlager Radio</text>
<rect x="289.20" y="403.00" width="8.30" height="498.00" fill="#eff2f4" />
<rect x="297.50" y="403.00" width="270.50" height="51.40" fill="#0f2c50" />
<rect x="297.50" y="454.40" width="270.50" height="446.60" fill="#1c5a8a" />
<text x="304.83" y="437.20" font-family="Liberation Sans, sans-serif" font-size="28.50" fill="#fff" textLength="194.72" lengthAdjust="spacingAndGlyphs" >Service Quality</text>
<text x="312.21" y="498.00" font-family="Liberation Sans, sans-serif" font-size="21.50" fill="#fff" textLength="82.04" lengthAdjust="spacingAndGlyphs" >SNR (dB)</text>
<rect x="492.00" y="470.00" width="60.00" height="37.30" fill="#8b8b8b" />
<rect x="492.00" y="470.00" width="11.00" height="37.30" fill="#ff0000" />
<text x="510.62" y="496.00" font-family="Liberation Sans, sans-serif" font-size="18.20" fill="#fff" textLength="22.75" lengthAdjust="spacingAndGlyphs" >6,6</text>
<text x="311.51" y="544.30" font-family="Liberation Sans, sans-serif" font-size="21.50" fill="#fff" textLength="93.51" lengthAdjust="spacingAndGlyphs" >FIC (ok %)</text>
<rect x="492.00" y="516.60" width="60.00" height="37.30" fill="#8b8b8b" />
<rect x="492.00" y="516.60" width="58.00" height="37.30" fill="#008000" />
<text x="512.77" y="542.60" font-family="Liberation Sans, sans-serif" font-size="18.20" fill="#fff" textLength="19.20" lengthAdjust="spacingAndGlyphs" >97</text>
<text x="311.52" y="591.00" font-family="Liberation Sans, sans-serif" font-size="21.50" fill="#fff" textLength="88.59" lengthAdjust="spacingAndGlyphs" >RS (ok %)</text>
<rect x="492.00" y="563.00" width="60.00" height="37.30" fill="#8b8b8b" />
<text x="516.83" y="589.00" font-family="Liberation Sans, sans-serif" font-size="18.20" fill="#fff" textLength="10.44" lengthAdjust="spacingAndGlyphs" >0</text>
<text x="311.37" y="636.00" font-family="Liberation Sans, sans-serif" font-size="21.50" fill="#fff" textLength="113.47" lengthAdjust="spacingAndGlyphs" >Null Symbol</text>
<rect x="492.00" y="608.80" width="60.00" height="37.30" fill="#8b8b8b" />
<rect x="492.00" y="608.80" width="60.00" height="37.30" fill="#008000" />
<text x="312.15" y="682.00" font-family="Liberation Sans, sans-serif" font-size="21.50" fill="#fff" textLength="159.44" lengthAdjust="spacingAndGlyphs" >SymbolTime (ms)</text>
<rect x="492.00" y="655.00" width="60.00" height="37.30" fill="#8b8b8b" />
<rect x="492.00" y="655.00" width="18.00" height="37.30" fill="#008000" />
<text x="505.72" y="681.00" font-family="Liberation Sans, sans-serif" font-size="18.20" fill="#fff" textLength="32.25" lengthAdjust="spacingAndGlyphs" >0,44</text>
<text x="311.45" y="727.60" font-family="Liberation Sans, sans-serif" font-size="21.50" fill="#fff" textLength="148.67" lengthAdjust="spacingAndGlyphs" >FrameTime (ms)</text>
<rect x="492.00" y="701.00" width="60.00" height="37.30" fill="#8b8b8b" />
<rect x="492.00" y="701.00" width="38.00" height="37.30" fill="#008000" />
<text x="505.90" y="727.00" font-family="Liberation Sans, sans-serif" font-size="18.20" fill="#fff" textLength="32.63" lengthAdjust="spacingAndGlyphs" >95,9</text>
<rect x="568.00" y="403.00" width="1.60" height="498.00" fill="#1d2f4c" />
<rect x="569.40" y="403.00" width="3.80" height="498.00" fill="#b4c0d4" />
<rect x="573.20" y="403.00" width="361.30" height="52.00" fill="#0f2c50" />
<rect x="573.20" y="455.00" width="361.30" height="446.00" fill="#1c5a8a" />
<rect x="582.00" y="455.00" width="352.50" height="48.70" fill="#0f2c50" />
<path d="M585.00,455.00 L585.00,417.00 Q585.00,414.00 588.00,414.00 L726.90,414.00 C737.05,414.00 744.40,419.88 744.40,428.00 L744.40,455.00 Z" fill="#868686" stroke="#9c9c9c" stroke-width="1"/>
<path d="M745.60,455.00 L745.60,417.00 Q745.60,414.00 748.60,414.00 L934.50,414.00 L934.50,455.00 Z" fill="#868686" stroke="#9c9c9c" stroke-width="1"/>
<path d="M585.00,503.70 L585.00,466.30 Q585.00,463.30 588.00,463.30 L690.10,463.30 C700.25,463.30 707.60,469.18 707.60,477.30 L707.60,503.70 Z" fill="#868686" stroke="#9c9c9c" stroke-width="1"/>
<path d="M807.40,503.70 L807.40,466.30 Q807.40,463.30 810.40,463.30 L934.50,463.30 L934.50,503.70 Z" fill="#868686" stroke="#9c9c9c" stroke-width="1"/>
<path d="M708.60,504.20 L708.60,466.30 Q708.60,463.30 711.60,463.30 L788.50,463.30 C798.65,463.30 806.00,469.18 806.00,477.30 L806.00,504.20 Z" fill="#1c5a8a" stroke="#3f82b8" stroke-width="1"/>
<rect x="709.20" y="503.20" width="96.20" height="2.00" fill="#1c5a8a" />
<text x="641.99" y="445.90" font-family="Liberation Sans, sans-serif" font-size="25.50" fill="#e6e6e6" textLength="47.37" lengthAdjust="spacingAndGlyphs" >AAC</text>
<text x="801.33" y="446.40" font-family="Liberation Sans, sans-serif" font-size="25.50" fill="#e0e0e0" textLength="88.95" lengthAdjust="spacingAndGlyphs" >Options</text>
<text x="621.60" y="494.50" font-family="Liberation Sans, sans-serif" font-size="25.50" fill="#e6e6e6" textLength="50.30" lengthAdjust="spacingAndGlyphs" >Sync</text>
<text x="745.14" y="495.20" font-family="Liberation Sans, sans-serif" font-size="25.50" fill="#fff" textLength="27.17" lengthAdjust="spacingAndGlyphs" >TII</text>
<text x="844.97" y="495.30" font-family="Liberation Sans, sans-serif" font-size="25.50" fill="#e0e0e0" textLength="65.52" lengthAdjust="spacingAndGlyphs" >Audio</text>
<circle cx="632.5" cy="526" r="6.4" fill="#ff0000"/>
<rect x="669.50" y="519.20" width="12.60" height="13.80" fill="#112a48" />
<rect x="596.00" y="547.60" width="338.50" height="1.00" fill="#9ab4cc" />
<rect x="596.00" y="601.60" width="338.50" height="1.00" fill="#9ab4cc" />
<text x="595.55" y="595.20" font-family="Liberation Sans, sans-serif" font-size="21.50" fill="#fff" textLength="71.20" lengthAdjust="spacingAndGlyphs" >Pattern</text>
<text x="696.21" y="595.20" font-family="Liberation Sans, sans-serif" font-size="21.50" fill="#fff" textLength="69.57" lengthAdjust="spacingAndGlyphs" >MainId</text>
<text x="796.09" y="595.20" font-family="Liberation Sans, sans-serif" font-size="21.50" fill="#fff" textLength="56.63" lengthAdjust="spacingAndGlyphs" >SubId</text>
<clipPath id="clip3"><rect x="573" y="560" width="361.5" height="60"/></clipPath>
<text x="882.60" y="595.20" font-family="Liberation Sans, sans-serif" font-size="21.50" fill="#fff" textLength="51.18" lengthAdjust="spacingAndGlyphs" >Stren</text>
<text x="598.61" y="640.40" font-family="Liberation Sans, sans-serif" font-size="20.50" fill="#fff" textLength="43.72" lengthAdjust="spacingAndGlyphs" >0x96</text>
<text x="699.11" y="640.40" font-family="Liberation Sans, sans-serif" font-size="20.50" fill="#fff" textLength="22.32" lengthAdjust="spacingAndGlyphs" >41</text>
<text x="797.59" y="640.40" font-family="Liberation Sans, sans-serif" font-size="20.50" fill="#fff" textLength="11.84" lengthAdjust="spacingAndGlyphs" >8</text>
<text x="885.40" y="640.40" font-family="Liberation Sans, sans-serif" font-size="20.50" fill="#fff" textLength="37.46" lengthAdjust="spacingAndGlyphs" >0.71</text>
<rect x="934.50" y="403.00" width="7.50" height="498.00" fill="#e8eef2" />
<rect x="942.00" y="403.00" width="919.00" height="30.10" fill="#0f2c50" />
<text x="1257.03" y="425.75" font-family="Liberation Sans, sans-serif" font-size="22.50" fill="#fff" textLength="319.70" lengthAdjust="spacingAndGlyphs" >Channel Impulse Response (CIR)</text>
<path d="M1839.6,411 L1857.8,411 L1848.7,426 Z" fill="none" stroke="#f0f0f0" stroke-width="1"/>
<circle cx="967" cy="460.8" r="9.6" fill="#e2e2e2"/>
<text x="982.51" y="467.50" font-family="Liberation Sans, sans-serif" font-size="18.50" fill="#fff" textLength="51.38" lengthAdjust="spacingAndGlyphs" >Freeze</text>
<circle cx="1073.5" cy="460.8" r="9.6" fill="#e2e2e2"/>
<text x="1089.76" y="467.50" font-family="Liberation Sans, sans-serif" font-size="18.50" fill="#fff" textLength="67.71" lengthAdjust="spacingAndGlyphs" >Gradient</text>
<text x="964.75" y="529.25" font-family="Liberation Sans, sans-serif" font-size="18.50" fill="#fff" textLength="133.29" lengthAdjust="spacingAndGlyphs" >Smoothing Level</text>
<rect x="967.00" y="541.00" width="1.20" height="6.00" fill="#b8b8b8" />
<rect x="986.70" y="542.60" width="1.20" height="4.40" fill="#a8a8a8" />
<rect x="1006.40" y="542.60" width="1.20" height="4.40" fill="#a8a8a8" />
<rect x="1026.10" y="542.60" width="1.20" height="4.40" fill="#a8a8a8" />
<rect x="1045.80" y="542.60" width="1.20" height="4.40" fill="#a8a8a8" />
<rect x="1065.50" y="542.60" width="1.20" height="4.40" fill="#a8a8a8" />
<rect x="1085.20" y="542.60" width="1.20" height="4.40" fill="#a8a8a8" />
<rect x="1104.90" y="542.60" width="1.20" height="4.40" fill="#a8a8a8" />
<rect x="1124.60" y="542.60" width="1.20" height="4.40" fill="#a8a8a8" />
<rect x="1144.30" y="542.60" width="1.20" height="4.40" fill="#a8a8a8" />
<rect x="1164.00" y="541.00" width="1.20" height="6.00" fill="#b8b8b8" />
<rect x="957.50" y="556.40" width="216.70" height="3.20" fill="#e4e4e4" rx="1.5"/>
<circle cx="1006.75" cy="558.40" r="9.6" fill="url(#thumb)" stroke="#3c3c3c" stroke-width="0.9"/>
<text x="964.50" y="609.50" font-family="Liberation Sans, sans-serif" font-size="18.50" fill="#fff" textLength="62.40" lengthAdjust="spacingAndGlyphs" >Zoom X</text>
<rect x="957.50" y="631.40" width="216.70" height="3.20" fill="#e4e4e4" rx="1.5"/>
<circle cx="967.50" cy="633.40" r="9.6" fill="url(#thumb)" stroke="#3c3c3c" stroke-width="0.9"/>
<text x="964.50" y="684.25" font-family="Liberation Sans, sans-serif" font-size="18.50" fill="#fff" textLength="61.61" lengthAdjust="spacingAndGlyphs" >Zoom Y</text>
<rect x="957.50" y="705.90" width="216.70" height="3.20" fill="#e4e4e4" rx="1.5"/>
<circle cx="967.50" cy="707.90" r="9.6" fill="url(#thumb)" stroke="#3c3c3c" stroke-width="0.9"/>
<text x="965.07" y="759.80" font-family="Liberation Sans, sans-serif" font-size="18.50" fill="#fff" textLength="46.19" lengthAdjust="spacingAndGlyphs" >x-Axis</text>
<circle cx="982.8" cy="783.3" r="7.8" fill="#fbfbfb" stroke="#8a8a8a" stroke-width="1.4"/>
<text x="1000.80" y="790.40" font-family="Liberation Sans, sans-serif" font-size="18.50" fill="#fff" textLength="65.75" lengthAdjust="spacingAndGlyphs" >Samples</text>
<circle cx="982.8" cy="812.8" r="7.8" fill="#fbfbfb" stroke="#8a8a8a" stroke-width="1.4"/>
<circle cx="982.8" cy="812.8" r="4.3" fill="#3a3a3a"/>
<text x="1000.18" y="820.30" font-family="Liberation Sans, sans-serif" font-size="18.50" fill="#fff" textLength="67.90" lengthAdjust="spacingAndGlyphs" >Distance</text>
<circle cx="982.8" cy="843" r="7.8" fill="#fbfbfb" stroke="#8a8a8a" stroke-width="1.4"/>
<text x="1001.25" y="849.60" font-family="Liberation Sans, sans-serif" font-size="18.50" fill="#fff" textLength="37.90" lengthAdjust="spacingAndGlyphs" >Time</text>
<rect x="1348.00" y="462.00" width="60.80" height="354.50" fill="#434343" />
<rect x="1337.39" y="462.00" width="1.10" height="354.50" fill="#8e8e8e" />
<rect x="1372.61" y="462.00" width="1.10" height="354.50" fill="#8e8e8e" />
<rect x="1443.05" y="462.00" width="1.10" height="354.50" fill="#8e8e8e" />
<rect x="1478.27" y="462.00" width="1.10" height="354.50" fill="#8e8e8e" />
<rect x="1513.49" y="462.00" width="1.10" height="354.50" fill="#8e8e8e" />
<rect x="1548.71" y="462.00" width="1.10" height="354.50" fill="#8e8e8e" />
<rect x="1583.93" y="462.00" width="1.10" height="354.50" fill="#8e8e8e" />
<rect x="1619.15" y="462.00" width="1.10" height="354.50" fill="#8e8e8e" />
<rect x="1654.37" y="462.00" width="1.10" height="354.50" fill="#8e8e8e" />
<rect x="1689.59" y="462.00" width="1.10" height="354.50" fill="#8e8e8e" />
<rect x="1724.81" y="462.00" width="1.10" height="354.50" fill="#8e8e8e" />
<rect x="1760.03" y="462.00" width="1.10" height="354.50" fill="#8e8e8e" />
<rect x="1795.25" y="462.00" width="1.10" height="354.50" fill="#8e8e8e" />
<rect x="1830.47" y="462.00" width="1.10" height="354.50" fill="#8e8e8e" />
<rect x="1314.50" y="532.70" width="525.20" height="1.10" fill="#8e8e8e" />
<rect x="1314.50" y="603.85" width="525.20" height="1.10" fill="#8e8e8e" />
<rect x="1314.50" y="675.00" width="525.20" height="1.10" fill="#8e8e8e" />
<rect x="1314.50" y="746.15" width="525.20" height="1.10" fill="#8e8e8e" />
<line x1="1408.8" y1="462" x2="1408.8" y2="816.5" stroke="#f6f050" stroke-width="1.2" stroke-dasharray="1.3,1.1"/>
<polyline points="1316.0,765.6 1316.7,781.0 1317.4,784.5 1318.2,787.0 1318.9,792.4 1319.6,785.9 1320.3,789.2 1321.0,798.2 1321.8,785.7 1322.5,770.9 1323.2,785.9 1323.9,799.3 1324.6,799.0 1325.4,778.9 1326.1,784.1 1326.8,779.7 1327.5,817.0 1328.2,790.4 1329.0,789.9 1329.7,795.4 1330.4,797.8 1331.1,803.7 1331.8,783.0 1332.6,817.0 1333.3,764.9 1334.0,763.2 1334.7,803.5 1335.4,785.0 1336.2,777.4 1336.9,783.8 1337.6,790.3 1338.3,784.7 1339.0,783.7 1339.8,795.0 1340.5,817.0 1341.2,781.4 1341.9,801.5 1342.6,777.4 1343.4,814.3 1344.1,800.0 1344.8,795.7 1345.5,793.3 1346.2,781.7 1347.0,784.1 1347.7,798.1 1348.4,792.6 1349.1,809.6 1349.8,778.9 1350.6,789.1 1351.3,762.6 1352.0,817.0 1352.7,780.0 1353.4,781.7 1354.2,788.9 1354.9,793.8 1355.6,785.3 1356.3,773.1 1357.0,806.2 1357.8,798.0 1358.5,775.2 1359.2,797.9 1359.9,793.8 1360.6,798.7 1361.4,817.0 1362.1,785.3 1362.8,776.2 1363.5,799.4 1364.2,802.3 1365.0,771.7 1365.7,793.2 1366.4,817.0 1367.1,817.0 1367.8,798.2 1368.6,765.3 1369.3,810.7 1370.0,776.8 1370.7,801.2 1371.4,779.2 1372.2,776.7 1372.9,765.9 1373.6,817.0 1374.3,777.7 1375.0,769.7 1375.8,780.9 1376.5,768.7 1377.2,782.8 1377.9,770.7 1378.6,773.2 1379.4,774.5 1380.1,808.1 1380.8,807.2 1381.5,780.1 1382.2,795.1 1383.0,803.1 1383.7,817.0 1384.4,782.9 1385.1,768.1 1385.8,811.6 1386.6,805.4 1387.3,798.2 1388.0,776.6 1388.7,799.7 1389.4,809.1 1390.2,762.2 1390.9,806.3 1391.6,795.8 1392.3,783.3 1393.0,800.9 1393.8,813.3 1394.5,794.5 1395.2,807.2 1395.9,795.9 1396.6,778.8 1397.4,792.6 1398.1,783.6 1398.8,777.6 1399.5,795.1 1400.2,799.6 1401.0,774.6 1401.7,788.9 1402.4,797.8 1403.1,756.0 1403.8,800.0 1404.6,800.6 1405.3,802.8 1406.0,801.9 1406.7,785.5 1407.4,794.9 1408.2,779.0 1408.9,776.2 1409.6,817.0 1410.3,787.0 1411.0,810.9 1411.8,778.3 1412.5,758.1 1413.2,796.5 1413.9,773.4 1414.6,786.9 1415.4,792.6 1416.1,784.6 1416.8,787.2 1417.5,768.3 1418.2,771.2 1419.0,792.4 1419.7,786.2 1420.4,809.8 1421.1,799.5 1421.8,778.2 1422.6,805.3 1423.3,768.8 1424.0,817.0 1424.7,785.9 1425.4,771.8 1426.2,765.6 1426.9,769.4 1427.6,798.8 1428.3,784.0 1429.0,780.8 1429.8,810.5 1430.5,776.4 1431.2,791.9 1431.9,791.5 1432.6,782.6 1433.4,782.6 1434.1,803.1 1434.8,794.9 1435.5,775.0 1436.2,768.7 1437.0,793.2 1437.7,789.1 1438.4,776.5 1439.1,783.8 1439.8,766.4 1440.6,783.3 1441.3,778.7 1442.0,789.5 1442.7,782.4 1443.4,770.7 1444.2,612.5 1444.9,740.2 1445.6,746.7 1446.3,753.2 1447.0,759.7 1447.8,766.1 1448.5,762.1 1449.2,764.7 1449.9,775.4 1450.6,774.8 1451.4,804.3 1452.1,761.5 1452.8,779.6 1453.5,765.3 1454.2,785.3 1455.0,767.5 1455.7,775.3 1456.4,779.3 1457.1,802.4 1457.8,762.2 1458.6,778.1 1459.3,780.7 1460.0,772.7 1460.7,784.8 1461.4,769.1 1462.2,765.2 1462.9,781.4 1463.6,793.0 1464.3,814.5 1465.0,792.3 1465.8,801.4 1466.5,778.0 1467.2,756.8 1467.9,790.1 1468.6,807.8 1469.4,780.5 1470.1,763.8 1470.8,817.0 1471.5,786.2 1472.2,772.8 1473.0,769.5 1473.7,796.3 1474.4,778.8 1475.1,798.2 1475.8,776.6 1476.6,771.9 1477.3,802.2 1478.0,706.0 1478.7,787.6 1479.4,784.7 1480.2,784.5 1480.9,786.4 1481.6,792.4 1482.3,807.6 1483.0,800.2 1483.8,800.7 1484.5,799.4 1485.2,792.5 1485.9,776.8 1486.6,788.0 1487.4,787.8 1488.1,803.5 1488.8,781.6 1489.5,784.4 1490.2,781.9 1491.0,787.4 1491.7,800.0 1492.4,781.6 1493.1,771.3 1493.8,807.3 1494.6,810.8 1495.3,804.3 1496.0,799.8 1496.7,789.5 1497.4,813.3 1498.2,777.7 1498.9,803.6 1499.6,802.1 1500.3,804.9 1501.0,795.7 1501.8,784.5 1502.5,779.5 1503.2,772.8 1503.9,801.1 1504.6,817.0 1505.4,785.3 1506.1,808.7 1506.8,774.6 1507.5,776.3 1508.2,784.6 1509.0,794.4 1509.7,817.0 1510.4,807.7 1511.1,792.0 1511.8,803.0 1512.6,790.8 1513.3,774.9 1514.0,785.7 1514.7,793.7 1515.4,801.7 1516.2,817.0 1516.9,793.7 1517.6,793.9 1518.3,803.3 1519.0,779.1 1519.8,817.0 1520.5,790.3 1521.2,764.0 1521.9,811.1 1522.6,795.9 1523.4,772.8 1524.1,792.7 1524.8,798.4 1525.5,794.8 1526.2,766.9 1527.0,809.2 1527.7,778.9 1528.4,806.0 1529.1,787.1 1529.8,799.9 1530.6,784.2 1531.3,799.2 1532.0,814.3 1532.7,780.8 1533.4,783.4 1534.2,799.5 1534.9,796.2 1535.6,805.5 1536.3,799.0 1537.0,777.8 1537.8,798.1 1538.5,769.1 1539.2,762.5 1539.9,778.1 1540.6,804.9 1541.4,796.9 1542.1,787.5 1542.8,783.8 1543.5,790.5 1544.2,773.6 1545.0,792.4 1545.7,776.5 1546.4,774.5 1547.1,817.0 1547.8,772.4 1548.6,786.5 1549.3,791.3 1550.0,817.0 1550.7,817.0 1551.4,771.6 1552.2,795.0 1552.9,779.1 1553.6,789.0 1554.3,756.0 1555.0,794.6 1555.8,803.1 1556.5,810.6 1557.2,794.7 1557.9,792.8 1558.6,794.9 1559.4,793.8 1560.1,789.2 1560.8,792.8 1561.5,799.6 1562.2,792.3 1563.0,798.6 1563.7,791.5 1564.4,780.6 1565.1,781.8 1565.8,815.7 1566.6,762.2 1567.3,782.2 1568.0,817.0 1568.7,800.0 1569.4,776.8 1570.2,788.5 1570.9,794.3 1571.6,783.6 1572.3,796.5 1573.0,772.8 1573.8,796.8 1574.5,799.8 1575.2,798.9 1575.9,789.3 1576.6,803.0 1577.4,788.2 1578.1,805.8 1578.8,786.5 1579.5,756.2 1580.2,792.7 1581.0,799.1 1581.7,817.0 1582.4,811.8 1583.1,805.5 1583.8,796.4 1584.6,800.6 1585.3,788.5 1586.0,779.9 1586.7,780.5 1587.4,817.0 1588.2,802.6 1588.9,791.9 1589.6,778.8 1590.3,763.9 1591.0,795.5 1591.8,807.0 1592.5,781.2 1593.2,788.5 1593.9,786.4 1594.6,783.0 1595.4,777.2 1596.1,816.4 1596.8,780.0 1597.5,800.6 1598.2,772.2 1599.0,774.1 1599.7,798.5 1600.4,788.1 1601.1,787.1 1601.8,808.8 1602.6,778.7 1603.3,789.2 1604.0,789.2 1604.7,792.1 1605.4,812.1 1606.2,788.6 1606.9,801.7 1607.6,792.3 1608.3,800.2 1609.0,798.2 1609.8,798.5 1610.5,776.3 1611.2,803.4 1611.9,782.3 1612.6,802.9 1613.4,817.0 1614.1,795.1 1614.8,802.8 1615.5,798.8 1616.2,795.5 1617.0,777.8 1617.7,815.3 1618.4,814.0 1619.1,813.7 1619.8,793.7 1620.6,786.9 1621.3,817.0 1622.0,789.9 1622.7,797.0 1623.4,815.8 1624.2,806.3 1624.9,794.4 1625.6,817.0 1626.3,784.5 1627.0,779.2 1627.8,801.9 1628.5,785.2 1629.2,803.8 1629.9,797.7 1630.6,803.9 1631.4,782.5 1632.1,788.6 1632.8,806.7 1633.5,786.9 1634.2,777.9 1635.0,778.1 1635.7,756.0 1636.4,817.0 1637.1,776.8 1637.8,814.2 1638.6,767.3 1639.3,801.7 1640.0,768.8 1640.7,765.5 1641.4,785.6 1642.2,796.4 1642.9,778.9 1643.6,773.1 1644.3,791.7 1645.0,801.2 1645.8,815.0 1646.5,817.0 1647.2,783.7 1647.9,801.3 1648.6,795.5 1649.4,787.9 1650.1,762.3 1650.8,772.7 1651.5,789.0 1652.2,816.7 1653.0,781.1 1653.7,795.1 1654.4,809.9 1655.1,817.0 1655.8,783.4 1656.6,817.0 1657.3,793.7 1658.0,817.0 1658.7,785.7 1659.4,794.1 1660.2,789.4 1660.9,803.5 1661.6,803.3 1662.3,817.0 1663.0,774.8 1663.8,801.1 1664.5,792.6 1665.2,808.7 1665.9,777.9 1666.6,769.8 1667.4,782.4 1668.1,817.0 1668.8,787.7 1669.5,802.5 1670.2,787.4 1671.0,790.3 1671.7,790.9 1672.4,800.6 1673.1,791.3 1673.8,800.7 1674.6,817.0 1675.3,756.0 1676.0,770.3 1676.7,809.3 1677.4,774.8 1678.2,785.0 1678.9,794.0 1679.6,776.8 1680.3,809.3 1681.0,777.7 1681.8,799.3 1682.5,805.1 1683.2,794.0 1683.9,770.1 1684.6,782.5 1685.4,791.6 1686.1,806.8 1686.8,794.6 1687.5,796.3 1688.2,785.6 1689.0,764.0 1689.7,791.3 1690.4,814.5 1691.1,802.5 1691.8,793.3 1692.6,782.5 1693.3,801.1 1694.0,793.7 1694.7,789.5 1695.4,787.4 1696.2,790.8 1696.9,798.1 1697.6,807.0 1698.3,786.9 1699.0,794.5 1699.8,790.4 1700.5,797.7 1701.2,790.4 1701.9,799.6 1702.6,803.6 1703.4,787.2 1704.1,794.6 1704.8,804.5 1705.5,771.5 1706.2,791.7 1707.0,817.0 1707.7,807.4 1708.4,775.4 1709.1,801.3 1709.8,795.0 1710.6,785.8 1711.3,777.5 1712.0,787.3 1712.7,805.2 1713.4,784.2 1714.2,788.8 1714.9,780.9 1715.6,793.1 1716.3,792.2 1717.0,769.4 1717.8,775.1 1718.5,769.8 1719.2,769.7 1719.9,808.0 1720.6,786.5 1721.4,810.4 1722.1,786.7 1722.8,756.0 1723.5,812.5 1724.2,803.4 1725.0,787.0 1725.7,790.5 1726.4,797.6 1727.1,792.7 1727.8,770.6 1728.6,802.7 1729.3,789.7 1730.0,810.3 1730.7,793.7 1731.4,800.3 1732.2,772.8 1732.9,806.7 1733.6,786.3 1734.3,789.6 1735.0,771.0 1735.8,795.3 1736.5,798.3 1737.2,786.9 1737.9,814.2 1738.6,784.3 1739.4,801.7 1740.1,797.8 1740.8,768.1 1741.5,798.2 1742.2,779.9 1743.0,798.8 1743.7,791.3 1744.4,796.3 1745.1,800.3 1745.8,803.9 1746.6,790.2 1747.3,788.5 1748.0,802.3 1748.7,780.8 1749.4,780.6 1750.2,793.1 1750.9,760.6 1751.6,811.7 1752.3,796.3 1753.0,803.4 1753.8,804.8 1754.5,802.9 1755.2,782.0 1755.9,782.5 1756.6,802.8 1757.4,769.3 1758.1,813.9 1758.8,792.5 1759.5,797.8 1760.2,790.0 1761.0,787.3 1761.7,767.4 1762.4,791.9 1763.1,805.0 1763.8,780.1 1764.6,804.6 1765.3,776.7 1766.0,811.5 1766.7,784.9 1767.4,795.8 1768.2,780.9 1768.9,781.4 1769.6,786.6 1770.3,810.5 1771.0,791.0 1771.8,801.6 1772.5,794.0 1773.2,784.7 1773.9,801.0 1774.6,799.6 1775.4,803.6 1776.1,817.0 1776.8,769.6 1777.5,790.0 1778.2,790.8 1779.0,810.0 1779.7,792.3 1780.4,785.6 1781.1,786.5 1781.8,796.5 1782.6,778.2 1783.3,803.5 1784.0,806.9 1784.7,816.9 1785.4,786.2 1786.2,779.4 1786.9,817.0 1787.6,758.4 1788.3,800.5 1789.0,793.6 1789.8,807.3 1790.5,798.4 1791.2,783.8 1791.9,798.4 1792.6,807.0 1793.4,802.7 1794.1,794.1 1794.8,802.8 1795.5,793.6 1796.2,808.4 1797.0,798.7 1797.7,782.4 1798.4,784.2 1799.1,784.2 1799.8,784.8 1800.6,789.0 1801.3,800.3 1802.0,795.5 1802.7,814.4 1803.4,814.0 1804.2,787.7 1804.9,793.5 1805.6,784.1 1806.3,806.9 1807.0,790.0 1807.8,798.9 1808.5,784.9 1809.2,796.3 1809.9,785.7 1810.6,793.5 1811.4,817.0 1812.1,792.0 1812.8,773.6 1813.5,817.0 1814.2,817.0 1815.0,808.4 1815.7,793.2 1816.4,789.6 1817.1,782.2 1817.8,798.4 1818.6,779.7 1819.3,803.9 1820.0,799.7 1820.7,772.4 1821.4,795.8 1822.2,810.2 1822.9,793.5 1823.6,796.1 1824.3,789.5 1825.0,791.7 1825.8,784.5 1826.5,815.9 1827.2,792.2 1827.9,817.0 1828.6,813.3 1829.4,803.1 1830.1,778.1 1830.8,764.8 1831.5,768.4 1832.2,817.0 1833.0,778.6 1833.7,803.0 1834.4,809.0 1835.1,775.7 1835.8,785.6 1836.6,808.3 1837.3,784.7 1838.0,780.2 1838.7,778.4 1839.4,781.7" fill="none" stroke="#f4f4f4" stroke-width="1.45" stroke-linejoin="round" clip-path="url(#clip2)"/>
<rect x="1443.50" y="612.00" width="1.60" height="150.00" fill="#f6f6f6" />
<rect x="1446.20" y="722.00" width="1.50" height="45.00" fill="#ececec" />
<rect x="1445.00" y="716.00" width="1.30" height="40.00" fill="#e0e0e0" />
<rect x="1448.20" y="744.00" width="1.40" height="28.00" fill="#e8e8e8" />
<rect x="1442.00" y="742.00" width="1.40" height="30.00" fill="#e8e8e8" />
<rect x="1477.20" y="706.00" width="1.70" height="62.00" fill="#f6f6f6" />
<rect x="1408.00" y="715.00" width="1.80" height="101.50" fill="#f2f2a4" />
<rect x="1314.50" y="461.00" width="526.20" height="2.00" fill="#9a9a9a" />
<rect x="1314.50" y="815.50" width="526.20" height="1.60" fill="#a8a8a8" />
<rect x="1838.70" y="461.00" width="2.00" height="356.50" fill="#9a9a9a" />
<rect x="1313.00" y="461.00" width="1.10" height="356.50" fill="#a0a0a0" />
<rect x="1314.00" y="462.00" width="1.60" height="354.50" fill="#b01a1a" />
<circle cx="1444.3" cy="612.5" r="6" fill="#ffff00"/>
<circle cx="1409" cy="715" r="6" fill="#1e9cd8"/>
<circle cx="1478" cy="705.8" r="6" fill="#e60000"/>
<text x="1303.00" y="470.00" text-anchor="end" font-family="Liberation Sans, sans-serif" font-size="20.00" fill="#fff">-10.0</text>
<text x="1303.00" y="541.15" text-anchor="end" font-family="Liberation Sans, sans-serif" font-size="20.00" fill="#fff">-20.0</text>
<text x="1303.00" y="612.30" text-anchor="end" font-family="Liberation Sans, sans-serif" font-size="20.00" fill="#fff">-30.0</text>
<text x="1303.00" y="683.45" text-anchor="end" font-family="Liberation Sans, sans-serif" font-size="20.00" fill="#fff">-40.0</text>
<text x="1303.00" y="754.60" text-anchor="end" font-family="Liberation Sans, sans-serif" font-size="20.00" fill="#fff">-50.0</text>
<text x="1303.00" y="825.75" text-anchor="end" font-family="Liberation Sans, sans-serif" font-size="20.00" fill="#fff">-60.0</text>
<text x="1337.04" y="837.80" text-anchor="middle" font-family="Liberation Sans, sans-serif" font-size="14.60" fill="#fff" >-60</text>
<text x="1372.26" y="857.80" text-anchor="middle" font-family="Liberation Sans, sans-serif" font-size="14.60" fill="#fff" >-40</text>
<text x="1407.48" y="837.80" text-anchor="middle" font-family="Liberation Sans, sans-serif" font-size="14.60" fill="#fff" >-20</text>
<text x="1443.20" y="857.80" text-anchor="middle" font-family="Liberation Sans, sans-serif" font-size="14.60" fill="#fff" >0</text>
<text x="1478.42" y="837.80" text-anchor="middle" font-family="Liberation Sans, sans-serif" font-size="14.60" fill="#fff" >20</text>
<text x="1513.64" y="857.80" text-anchor="middle" font-family="Liberation Sans, sans-serif" font-size="14.60" fill="#fff" >40</text>
<text x="1548.86" y="837.80" text-anchor="middle" font-family="Liberation Sans, sans-serif" font-size="14.60" fill="#fff" >60</text>
<text x="1584.08" y="857.80" text-anchor="middle" font-family="Liberation Sans, sans-serif" font-size="14.60" fill="#fff" >80</text>
<text x="1619.30" y="837.80" text-anchor="middle" font-family="Liberation Sans, sans-serif" font-size="14.60" fill="#fff" >100</text>
<text x="1654.52" y="857.80" text-anchor="middle" font-family="Liberation Sans, sans-serif" font-size="14.60" fill="#fff" >120</text>
<text x="1689.74" y="837.80" text-anchor="middle" font-family="Liberation Sans, sans-serif" font-size="14.60" fill="#fff" >140</text>
<text x="1724.96" y="857.80" text-anchor="middle" font-family="Liberation Sans, sans-serif" font-size="14.60" fill="#fff" >160</text>
<text x="1760.18" y="837.80" text-anchor="middle" font-family="Liberation Sans, sans-serif" font-size="14.60" fill="#fff" >180</text>
<text x="1795.40" y="857.80" text-anchor="middle" font-family="Liberation Sans, sans-serif" font-size="14.60" fill="#fff" >200</text>
<text x="1830.62" y="837.80" text-anchor="middle" font-family="Liberation Sans, sans-serif" font-size="14.60" fill="#fff" >220</text>
<text x="1466.45" y="885.75" font-family="Liberation Sans, sans-serif" font-size="19.80" fill="#fff" textLength="220.17" lengthAdjust="spacingAndGlyphs" >Distance Difference (km)</text>
<text transform="translate(1235.8,640.7) rotate(-90)" text-anchor="middle" font-family="Liberation Sans, sans-serif" font-size="20.3" fill="#fff" textLength="135.2" lengthAdjust="spacingAndGlyphs">Magnitude (dB)</text>
</svg>
</body>
</html>
